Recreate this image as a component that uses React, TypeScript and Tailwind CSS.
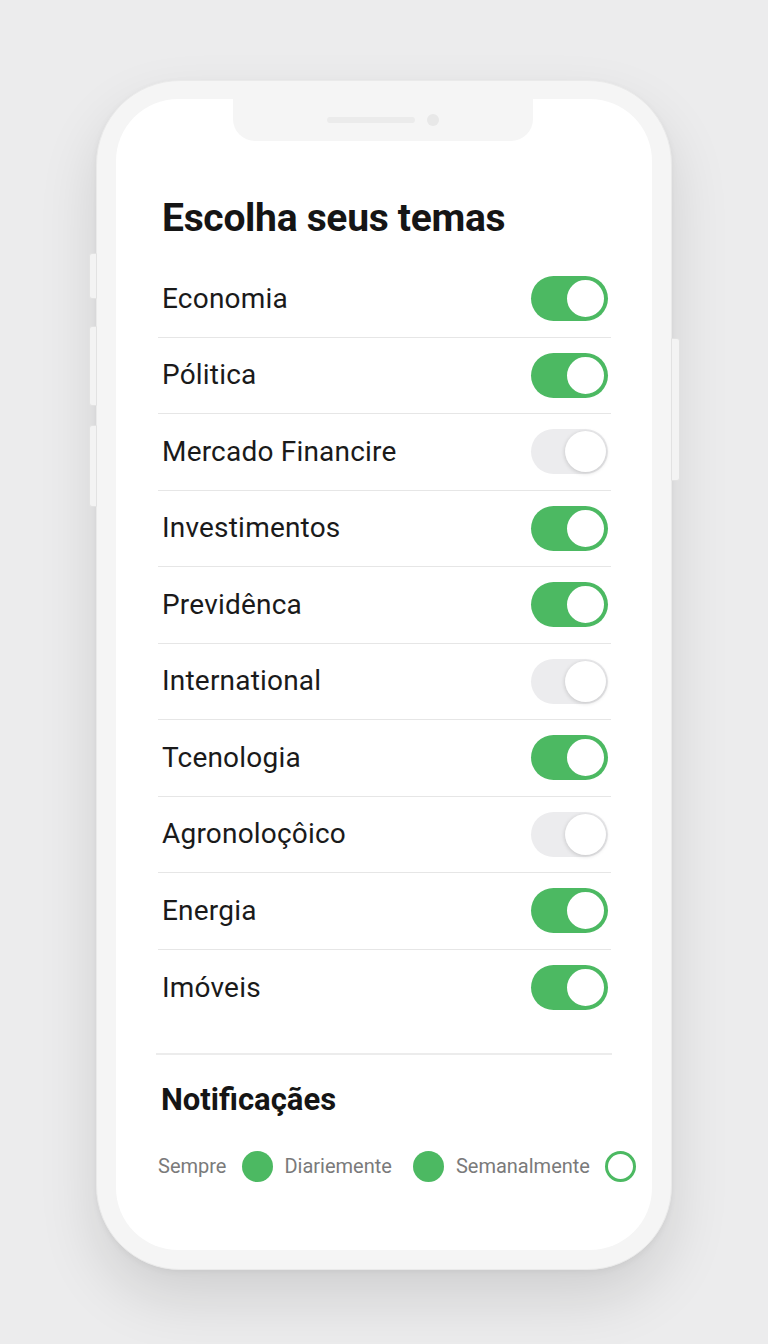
import React from "react";

const topics: [string, boolean][] = [
  ["Economia", true],
  ["Pólitica", true],
  ["Mercado Financire", false],
  ["Investimentos", true],
  ["Previdênca", true],
  ["International", false],
  ["Tcenologia", true],
  ["Agronoloçôico", false],
  ["Energia", true],
  ["Imóveis", true],
];

function Toggle({ on }: { on: boolean }) {
  return on ? (
    <div className="w-[77px] h-[45px] rounded-full bg-[#4cb962] flex items-center justify-end pr-[2px]">
      <div className="w-[41px] h-[41px] rounded-full bg-white border-[2px] border-[#4cb962]" />
    </div>
  ) : (
    <div className="w-[77px] h-[45px] rounded-full bg-[#ececee] flex items-center justify-end pr-[2px]">
      <div className="w-[41px] h-[41px] rounded-full bg-white shadow-[0_1px_4px_rgba(0,0,0,0.18)]" />
    </div>
  );
}

export default function App() {
  return (
    <div
      className="w-[768px] h-[1344px] bg-[#ececed] flex justify-center pt-[80px]"
      style={{ fontFamily: "Roboto, 'Noto Sans', sans-serif" }}
    >
      <div className="relative w-[576px] h-[1190px]">
        {/* side buttons */}
        <div className="absolute left-[-7px] top-[173px] w-[8px] h-[46px] rounded-l-[3px] bg-[#f3f3f3] border border-[#e2e2e2]" />
        <div className="absolute left-[-7px] top-[246px] w-[8px] h-[80px] rounded-l-[3px] bg-[#f3f3f3] border border-[#e2e2e2]" />
        <div className="absolute left-[-7px] top-[345px] w-[8px] h-[82px] rounded-l-[3px] bg-[#f3f3f3] border border-[#e2e2e2]" />
        <div className="absolute right-[-8px] top-[258px] w-[9px] h-[143px] rounded-r-[3px] bg-[#f3f3f3] border border-[#e2e2e2]" />
        <div className="w-full h-full rounded-[84px] bg-[#f5f5f5] shadow-[0_28px_60px_rgba(0,0,0,0.12),0_2px_6px_rgba(0,0,0,0.05)] border border-[#eaeaea] pt-[18px] px-[19px] pb-[19px]">
          <div className="relative w-full h-full rounded-[62px] bg-white overflow-hidden pt-[97px]">
            {/* notch */}
            <div className="absolute left-[117px] top-0 w-[300px] h-[42px] bg-[#f5f5f5] rounded-b-[22px] flex items-center justify-center gap-[12px]">
              <div className="w-[88px] h-[6px] rounded-full bg-[#ebebeb]" />
              <div className="w-[12px] h-[12px] rounded-full bg-[#e8e8e8]" />
            </div>

            <div className="pl-[46px] pr-[41px]">
              <h1 className="text-[39px] leading-[44px] font-bold text-[#151515] tracking-[-0.3px] mb-[21px]">
                Escolha seus temas
              </h1>
            </div>
            <div className="ml-[42px] mr-[41px]">
              {topics.map(([name, on], i) => (
                <div
                  key={name}
                  className={
                    "h-[76.5px] flex items-center justify-between pl-[4px] pr-[3px] " +
                    (i < topics.length - 1 ? "border-b border-[#e6e6e6]" : "")
                  }
                >
                  <span className="text-[28px] tracking-[0.2px] text-[#1a1a1a]">{name}</span>
                  <Toggle on={on} />
                </div>
              ))}
            </div>
            <div className="mx-[40px] mt-[27px] border-t-[2px] border-[#ececec]" />
            <div className="pl-[45px] mt-[26px]">
              <h2 className="text-[31px] leading-[38px] font-bold text-[#151515]">Notificaçães</h2>
            </div>
            <div className="pl-[42px] mt-[31px] h-[32px] flex items-center text-[20px] text-[#7a7a7a]">
              <span>Sempre</span>
              <div className="ml-[16px] w-[31px] h-[31px] rounded-full bg-[#4cb962]" />
              <span className="ml-[11px]">Diariemente</span>
              <div className="ml-[21px] w-[31px] h-[31px] rounded-full bg-[#4cb962]" />
              <span className="ml-[12px]">Semanalmente</span>
              <div className="ml-[15px] w-[31px] h-[31px] rounded-full border-[3px] border-[#4cb962]" />
            </div>
          </div>
        </div>
      </div>
    </div>
  );
}
